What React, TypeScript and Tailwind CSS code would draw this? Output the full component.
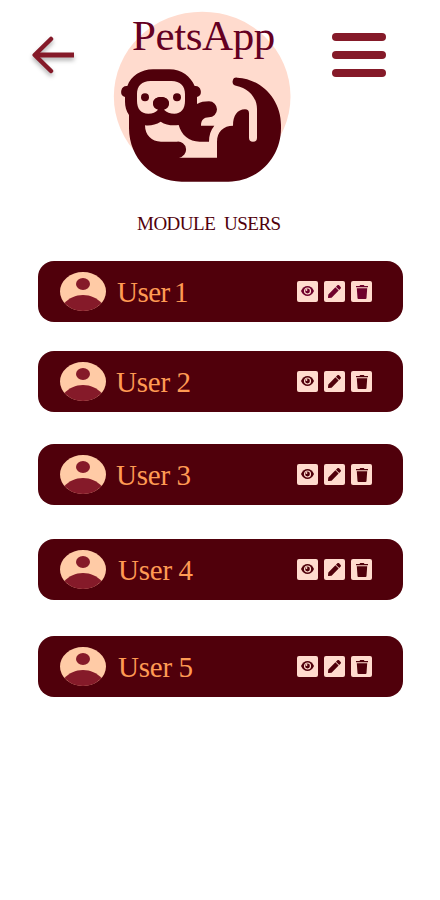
import React from "react";
import { FaPen } from "react-icons/fa";

type User = { name: string; gap: string; label: string; icon: string };

const users: User[] = [
  { name: "User 1", gap: "mt-0", label: "ml-[11px] tracking-[-0.5px] [word-spacing:-2.5px]", icon: "text-[#6f002c]" },
  { name: "User 2", gap: "mt-[29px]", label: "ml-[10px] tracking-[-0.2px] [word-spacing:-0.5px]", icon: "text-[#50000b]" },
  { name: "User 3", gap: "mt-8", label: "ml-[10px] tracking-[-0.2px] [word-spacing:-0.5px]", icon: "text-[#50000b]" },
  { name: "User 4", gap: "mt-[34px]", label: "ml-[12px] tracking-[-0.2px] [word-spacing:-0.5px]", icon: "text-[#50000b]" },
  { name: "User 5", gap: "mt-9", label: "ml-[12px] tracking-[-0.2px] [word-spacing:-0.5px]", icon: "text-[#50000b]" },
];

function BackArrow() {
  return (
    <svg className="ml-6 mt-7 h-14 w-14 shrink-0 drop-shadow-[0_3px_2px_rgba(0,0,0,0.3)]" viewBox="24 28 56 56" fill="none">
      <path d="M51 39 34.7 55 51 71" stroke="#851a29" strokeWidth="4.5" strokeLinecap="round" strokeLinejoin="round" />
      <path d="M36 55H74" stroke="#851a29" strokeWidth="4.8" />
    </svg>
  );
}

function Otter() {
  return (
    <svg className="col-start-1 row-start-1 h-[185px] w-[195px]" viewBox="0 0 585 555">
      <ellipse cx="291.5" cy="274.5" rx="265" ry="254.5" fill="#ffdbce" />
      <g fill="#50000b">
        <path
          fillRule="evenodd"
          d="M72 330C64 318 60 304 60 290V276A17 17 0 0 1 67 243C78 213 108 193 144 193H193C230 193 257 215 269 243A17 17 0 0 1 276 276V297C286 291 298 289 312 289A24 24 0 0 1 312 337C296 337 288 346 288 362H328C317 375 312 391 312 410H284C252 410 229 390 221 360C201 363 183 360 167 350C152 359 137 363 120 361C120 390 140 410 168 410H216A24 24 0 0 1 222 458H336V410C336 380 356 362 384 362C384 332 397 313 420 313Q432 313 432 325V398A12 12 0 0 0 456 398V312C456 278 431 250 393 242A12 12 0 0 1 397 218C471 222 528 285 528 360V370C528 459 458 530 370 530H230C142 530 72 459 72 370ZM136 228C111 228 96 243 96 267V287C96 311 108 326 130 326C143 326 152 322 159 314C149 311 144 304 144 296C144 284 153 276 168 276S192 284 192 296C192 304 187 311 177 314C185 322 195 326 208 326C228 326 240 311 240 287V267C240 243 225 228 200 228Z"
        />
        <ellipse cx="168" cy="294" rx="24" ry="18" />
        <circle cx="120" cy="277" r="12" />
        <circle cx="216" cy="277" r="12" />
      </g>
    </svg>
  );
}

function Avatar() {
  return (
    <svg className="ml-[22px] h-[39px] w-[46px] shrink-0" viewBox="0 0 46 39">
      <ellipse cx="23" cy="19.5" rx="23" ry="19.5" fill="#ffcba6" />
      <ellipse cx="23" cy="12" rx="7" ry="6" fill="#851a29" />
      <path d="M4.5 31C9 26 15.5 23 23 23S37 26 41.5 31C37 36 30.5 39 23 39S9 36 4.5 31Z" fill="#851a29" />
    </svg>
  );
}

function EyeIcon() {
  return (
    <svg className="h-[21px] w-[21px]" viewBox="0 0 21 21" fill="currentColor">
      <path d="M4 10C5.5 6.8 7.8 5 10.5 5S15.500 6.800 17 10C15.5 13.2 13.2 15 10.5 15S5.500 13.200 4 10Z" />
      <circle cx="10.5" cy="10" r="3" fill="none" stroke="#ffdbce" strokeWidth="1.2" />
      <circle cx="9.5" cy="9" r="0.9" fill="#ffdbce" />
    </svg>
  );
}

function TrashIcon() {
  return (
    <svg className="h-[21px] w-[21px]" viewBox="0 0 21 21" fill="currentColor">
      <path d="M5 5H8.5L9.2 4H12.8L13.5 5H17V6.2H5Z" />
      <path d="M5.8 7.3H16.2L15.5 17A1 1 0 0 1 14.5 18H7.5A1 1 0 0 1 6.5 17Z" />
    </svg>
  );
}

function UserRow({ user }: { user: User }) {
  const button = `flex h-[21px] w-[21px] items-center justify-center rounded-[2px] bg-[#ffdbce] ${user.icon}`;
  return (
    <li className={`flex h-[61px] w-[365px] items-center rounded-2xl bg-[#50000b] ${user.gap}`}>
      <Avatar />
      <span className={`mt-px whitespace-nowrap text-[29px] leading-none text-[#ff9b54] ${user.label}`}>{user.name}</span>
      <div className="ml-auto mr-[31px] flex gap-[6px]">
        <button className={button} aria-label="View"><EyeIcon /></button>
        <button className={button} aria-label="Edit"><FaPen className="h-[13px] w-[13px]" /></button>
        <button className={button} aria-label="Delete"><TrashIcon /></button>
      </div>
    </li>
  );
}

export default function App() {
  return (
    <main className="h-[900px] w-[440px] overflow-hidden bg-white font-['Liberation_Serif',serif]">
      <header className="flex h-[205px] items-start">
        <button aria-label="Back"><BackArrow /></button>
        <div className="ml-[25px] mt-[5px] grid shrink-0">
          <Otter />
          <h1 className="z-10 col-start-1 row-start-1 ml-[27px] mt-[9px] h-12 whitespace-nowrap text-[43px] leading-none tracking-[-0.4px] text-[#640022]">PetsApp</h1>
        </div>
        <button className="ml-8 mt-[33px] flex flex-col gap-[10px]" aria-label="Menu">
          <span className="h-2 w-[54px] rounded-full bg-[#851a29]" />
          <span className="h-2 w-[54px] rounded-full bg-[#851a29]" />
          <span className="h-2 w-[54px] rounded-full bg-[#851a29]" />
        </button>
      </header>
      <h2 className="ml-[137px] mt-[9px] h-[47px] whitespace-nowrap text-[19px] leading-5 tracking-[-0.5px] text-[#50000b] [word-spacing:4.5px]">MODULE USERS</h2>
      <ul className="ml-[38px]">
        {users.map((user) => <UserRow key={user.name} user={user} />)}
      </ul>
    </main>
  );
}
